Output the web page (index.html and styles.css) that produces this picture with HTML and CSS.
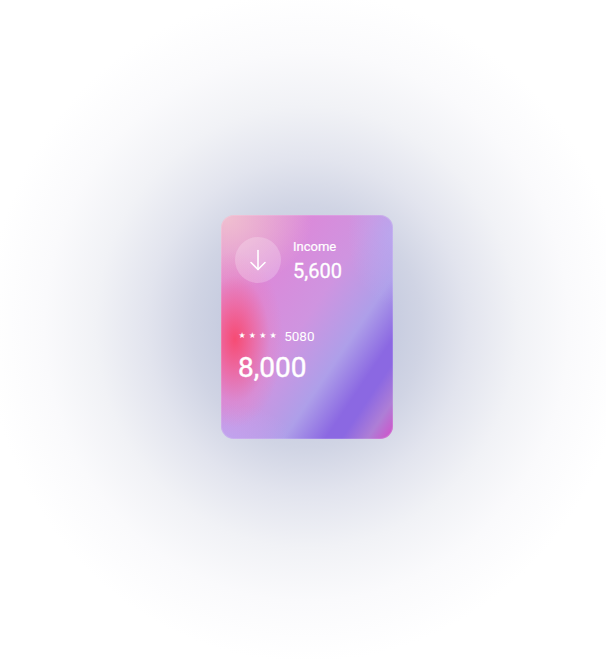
FILE: index.html
```html
<!DOCTYPE html>
<html lang="en">
	<head>
		<title>Income card</title>
		<meta charset="utf-8">
		<link rel="stylesheet" href="styles.css">
	</head>

	<body>
		<div class="card">
			<div class="income">
				<div class="iconCircle">
					<svg width="18" height="22" viewBox="0 0 18 22" fill="none" stroke="#fff" stroke-width="1.6" stroke-linecap="round" stroke-linejoin="round">
						<path d="M9 1.5V20.5"/>
						<path d="M2 13.5L9 20.5L16 13.5"/>
					</svg>
				</div>
				<div class="incomeText">
					<div class="incomeLabel">Income</div>
					<div class="incomeValue">5,600</div>
				</div>
			</div>
			<div class="balance">
				<div class="cardNumber">
					<span class="stars">
						<span class="star">&#9733;</span>
						<span class="star">&#9733;</span>
						<span class="star">&#9733;</span>
						<span class="star">&#9733;</span>
					</span>
					<span>5080</span>
				</div>
				<div class="balanceValue">8,000</div>
			</div>
		</div>
	</body>
</html>
```

FILE: styles.css
```css
body {
	margin: 0;
	padding: 215px 0 0 221px;
	height: 659px;
	box-sizing: border-box;
	overflow: hidden;
	color: #fff;
	font-family: Roboto, "Liberation Sans", sans-serif;
	background-color: #fff;
	background-image: radial-gradient(ellipse 320px 335px at 307px 327px, #bcc3da 0%, #c3c9de 22%, #d0d4e4 36%, #e2e4ee 50%, #f1f2f6 66%, #fafafc 82%, #fff 100%);
}

.card {
	width: 172px;
	height: 224px;
	box-sizing: border-box;
	padding: 21px 14px 0 14px;
	border-radius: 13px;
	box-shadow: inset 0 0 0 1px rgba(255, 255, 255, 0.14);
	background-image:
		radial-gradient(ellipse 48px 88px at 14px 124px, rgba(248, 72, 110, 0.95) 0%, rgba(246, 90, 138, 0.66) 38%, rgba(238, 120, 180, 0.26) 72%, rgba(238, 120, 180, 0) 100%),
		radial-gradient(ellipse 85px 70px at 6px 4px, rgba(240, 192, 208, 0.95), rgba(240, 192, 208, 0)),
		radial-gradient(ellipse 70px 36px at 0 224px, rgba(190, 165, 240, 0.95), rgba(190, 165, 240, 0)),
		radial-gradient(ellipse 45px 70px at 172px 20px, rgba(185, 170, 240, 0.75), rgba(185, 170, 240, 0)),
		linear-gradient(124deg, #e596cf 0%, #da8ada 28%, #cf94e0 48%, #ae9fe9 66%, #8b68e2 79%, #8b68e2 84%, #ae7ed6 92%, #d44ec8 100%);
}

.income {
	display: flex;
	align-items: flex-start;
	gap: 12px;
}

.iconCircle {
	width: 46px;
	height: 46px;
	margin-top: 1px;
	border-radius: 50%;
	background-color: rgba(255, 255, 255, 0.22);
	display: flex;
	align-items: center;
	justify-content: center;
}

.incomeText {
	padding-top: 2px;
}

.incomeLabel {
	font-size: 13px;
	line-height: 18px;
	-webkit-text-stroke: 0.2px #fff;
}

.incomeValue {
	font-size: 20px;
	line-height: 24px;
	margin-top: 3px;
	-webkit-text-stroke: 0.3px #fff;
}

.balance {
	margin-top: 44px;
	padding-left: 3px;
}

.cardNumber {
	display: flex;
	align-items: center;
	gap: 7px;
	font-size: 13.5px;
	line-height: 18px;
}

.stars {
	display: flex;
	gap: 2.4px;
}

.star {
	width: 8px;
	font-size: 8px;
	line-height: 8px;
	text-align: center;
	font-family: "DejaVu Sans", sans-serif;
}

.balanceValue {
	font-size: 28px;
	line-height: 36px;
	margin-top: 5px;
	-webkit-text-stroke: 0.4px #fff;
}
```
